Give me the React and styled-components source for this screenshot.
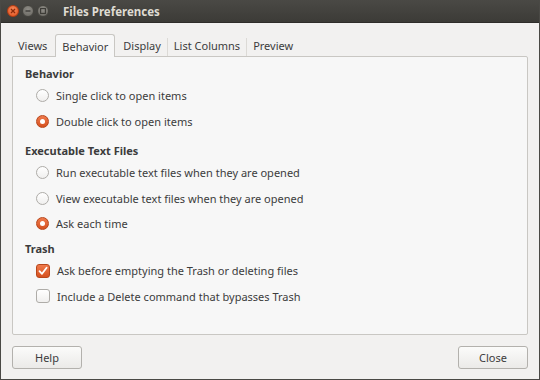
import { Fragment } from "react";
import styled, { createGlobalStyle } from "styled-components";

const GlobalStyle = createGlobalStyle`
    html, body {
        margin: 0;
        padding: 0;
        background: #f2f1f0;
    }
    * {
        box-sizing: border-box;
    }
`;

const Window = styled.div`
    width: 540px;
    height: 380px;
    display: flex;
    flex-direction: column;
    background: #f2f1f0;
    border: 1px solid #4a4945;
    border-top: none;
    font-family: "Noto Sans", "DejaVu Sans", sans-serif;
    font-size: 11px;
    color: #3c3c3c;
`;

const TitleBar = styled.div`
    height: 23px;
    display: flex;
    align-items: center;
    padding-left: 6px;
    gap: 3px;
    background: linear-gradient(to bottom, #4a4945, #3c3b37);
    border-bottom: 1px solid #2e2d2a;
`;

const WinButton = styled.span`
    width: 12px;
    height: 12px;
    border-radius: 50%;
    display: flex;
    align-items: center;
    justify-content: center;
    background: ${(p) => (p.$close ? "radial-gradient(circle at 50% 35%, #f58a5c, #e0501c)" : "radial-gradient(circle at 50% 35%, #8f8d87, #67655f)")};
    border: 1px solid ${(p) => (p.$close ? "#b53c12" : "#45443f")};
`;

const Title = styled.span`
    margin-left: 11px;
    color: #dfdbd2;
    font-weight: bold;
    font-size: 11.5px;
`;

const Body = styled.div`
    flex: 1;
    display: flex;
    flex-direction: column;
    padding: 10px 11px 10px 11px;
`;

const TabRow = styled.div`
    display: flex;
    align-items: flex-end;
    height: 23px;
    position: relative;
    z-index: 1;
`;

const Tab = styled.div`
    height: ${(p) => (p.$active ? "23px" : "21px")};
    padding: 0 ${(p) => (p.$active ? "6px" : "5px")};
    display: flex;
    align-items: center;
    color: #3c3c3c;
    margin: 0 ${(p) => (p.$active ? "2px" : "0")};
    background: ${(p) => (p.$active ? "#f7f7f7" : "transparent")};
    border: 1px solid ${(p) => (p.$active ? "#c9c7c3" : "transparent")};
    border-bottom: none;
    border-radius: 3px 3px 0 0;
    margin-bottom: ${(p) => (p.$active ? "-1px" : "0")};
    padding-bottom: ${(p) => (p.$active ? "0" : "1px")};
`;

const TabSep = styled.span`
    width: 1px;
    height: 18px;
    background: #dcdad6;
    align-self: flex-end;
`;

const Panel = styled.div`
    height: 279px;
    background: #f7f7f7;
    border: 1px solid #c9c7c3;
    border-radius: 0 2px 2px 2px;
    padding: 8px 12px;
    display: flex;
    flex-direction: column;
`;

const Heading = styled.div`
    font-weight: bold;
    color: #3c3c3c;
    height: 18px;
    line-height: 18px;
    margin-top: ${(p) => p.$top || "0"};
`;

const Option = styled.label`
    display: flex;
    align-items: center;
    height: 25.5px;
    padding-left: 11px;
    gap: 7px;
    color: #3c3c3c;
`;

const Radio = styled.span`
    width: 13px;
    height: 13px;
    border-radius: 50%;
    flex: none;
    display: flex;
    align-items: center;
    justify-content: center;
    background: ${(p) => (p.$checked ? "linear-gradient(to bottom, #ef7a4c, #d6511f)" : "linear-gradient(to bottom, #ffffff, #f0efee)")};
    border: 1px solid ${(p) => (p.$checked ? "#b8461b" : "#aeaca8")};
    &::after {
        content: "";
        display: ${(p) => (p.$checked ? "block" : "none")};
        width: 5px;
        height: 5px;
        border-radius: 50%;
        background: #ffffff;
    }
`;

const Check = styled.span`
    width: 14px;
    height: 14px;
    border-radius: 3px;
    flex: none;
    display: flex;
    align-items: center;
    justify-content: center;
    background: ${(p) => (p.$checked ? "linear-gradient(to bottom, #ef7a4c, #d6511f)" : "linear-gradient(to bottom, #ffffff, #f0efee)")};
    border: 1px solid ${(p) => (p.$checked ? "#b8461b" : "#aeaca8")};
`;

const Footer = styled.div`
    display: flex;
    justify-content: space-between;
    margin-top: 11px;
`;

const Button = styled.button`
    width: 70px;
    height: 23px;
    font-family: inherit;
    font-size: 11px;
    color: #3c3c3c;
    background: linear-gradient(to bottom, #fbfbfa, #ebeae8);
    border: 1px solid #b3b1ad;
    border-radius: 3px;
    padding: 0;
`;

function CheckMark() {
    return (
        <svg width="10" height="10" viewBox="0 0 10 10">
            <path d="M1.5 5.2 L4 7.8 L8.6 1.8" fill="none" stroke="#fff" strokeWidth="1.8" strokeLinecap="round" strokeLinejoin="round" />
        </svg>
    );
}

function WinGlyph({ kind }) {
    if (kind === "close") {
        return (
            <svg width="6" height="6" viewBox="0 0 6 6">
                <path d="M1 1 L5 5 M5 1 L1 5" stroke="#8a2a0a" strokeWidth="1.3" />
            </svg>
        );
    }
    if (kind === "min") {
        return (
            <svg width="6" height="6" viewBox="0 0 6 6">
                <path d="M0.5 3 H5.5" stroke="#3a3935" strokeWidth="1.3" />
            </svg>
        );
    }
    return (
        <svg width="6" height="6" viewBox="0 0 6 6">
            <rect x="0.6" y="0.6" width="4.8" height="4.8" fill="none" stroke="#3a3935" strokeWidth="1.1" />
        </svg>
    );
}

export default function App() {
    const tabs = ["Views", "Behavior", "Display", "List Columns", "Preview"];
    const activeTab = "Behavior";

    return (
        <>
            <GlobalStyle />
            <Window>
                <TitleBar>
                    <WinButton $close><WinGlyph kind="close" /></WinButton>
                    <WinButton><WinGlyph kind="min" /></WinButton>
                    <WinButton><WinGlyph kind="max" /></WinButton>
                    <Title>Files Preferences</Title>
                </TitleBar>
                <Body>
                    <TabRow>
                        {tabs.map((t, i) => (
                            <Fragment key={t}>
                                {i > 0 && t !== activeTab && tabs[i - 1] !== activeTab && <TabSep />}
                                <Tab $active={t === activeTab}>{t}</Tab>
                            </Fragment>
                        ))}
                    </TabRow>
                    <Panel>
                        <Heading>Behavior</Heading>
                        <Option><Radio />Single click to open items</Option>
                        <Option><Radio $checked />Double click to open items</Option>

                        <Heading $top="8px">Executable Text Files</Heading>
                        <Option><Radio />Run executable text files when they are opened</Option>
                        <Option><Radio />View executable text files when they are opened</Option>
                        <Option><Radio $checked />Ask each time</Option>

                        <Heading $top="3.5px">Trash</Heading>
                        <Option><Check $checked><CheckMark /></Check>Ask before emptying the Trash or deleting files</Option>
                        <Option><Check />Include a Delete command that bypasses Trash</Option>
                    </Panel>
                    <Footer>
                        <Button>Help</Button>
                        <Button>Close</Button>
                    </Footer>
                </Body>
            </Window>
        </>
    );
}
